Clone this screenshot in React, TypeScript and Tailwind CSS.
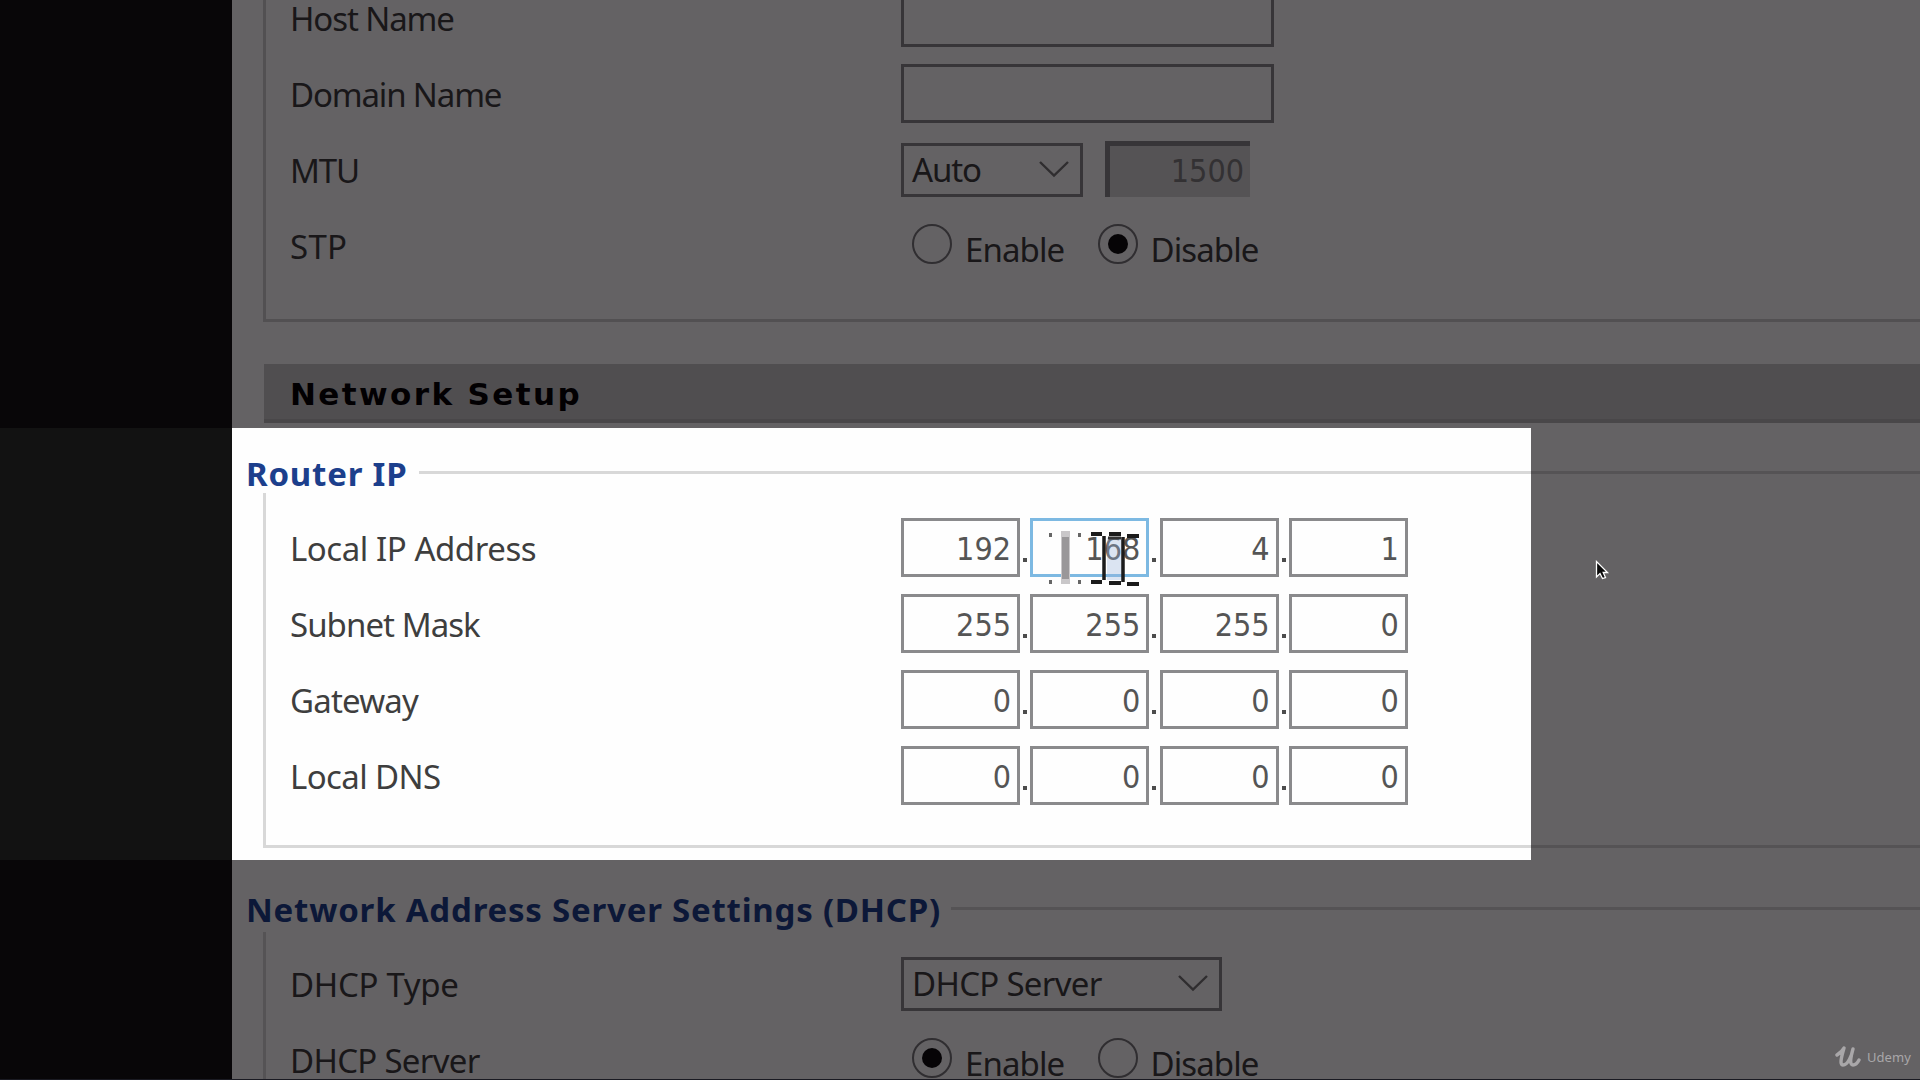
import React from "react";

const label = "font-['Noto_Sans',sans-serif] text-[33px] leading-[44px] whitespace-pre text-[#3e3e3e]";
const digits = "font-['DejaVu_Sans_Condensed','DejaVu_Sans',sans-serif] [font-stretch:condensed] text-[32px] leading-[38px] whitespace-pre";
const heading = "font-['Noto_Sans',sans-serif] font-bold text-[33px] leading-[44px] tracking-[0.78px] whitespace-pre text-[#1c3f8c]";

function Row({ name, tracking, children }: { name: string; tracking: string; children: React.ReactNode }) {
  return (
    <div className="flex h-[76px] items-center">
      <div className={`w-[611px] shrink-0 pt-px ${label} ${tracking}`}>{name}</div>
      {children}
    </div>
  );
}

function Box() {
  return <div className="mb-0.5 h-[59px] w-[373px] border-[3px] border-[#8a8a8c]" />;
}

function Select({ value, size, tracking }: { value: string; size: string; tracking: string }) {
  return (
    <div className={`flex h-[54px] items-center justify-between border-[3px] border-[#8a8a8c] pr-[11px] pl-2 ${size}`}>
      <span className={`${label} ${tracking}`}>{value}</span>
      <svg width="30" height="18" viewBox="0 0 30 18" fill="none" stroke="#757575" strokeWidth="2.4">
        <path d="M1 1 L15 14.5 L29 1" />
      </svg>
    </div>
  );
}

function Radio({ text, on, size }: { text: string; on?: boolean; size: string }) {
  return (
    <div className={`flex items-center ${size}`}>
      <div className="-mt-1 flex size-10 shrink-0 items-center justify-center rounded-full border-[2.5px] border-[#77777a]">
        {on && <div className="size-5 rounded-full bg-[#0c0c0c]" />}
      </div>
      <span className={`ml-[13px] pt-2 tracking-[-0.9px] ${label}`}>{text}</span>
    </div>
  );
}

function Octets({ values, focus }: { values: string[]; focus?: number }) {
  return (
    <div className="mb-px flex">
      {values.map((v, i) => (
        <React.Fragment key={i}>
          <div className={`relative flex h-[59px] w-[119px] items-center justify-end border-[3px] pr-1.5 text-[#555] ${focus === i ? "border-[#7db9e2]" : "border-[#8a8a8c]"}`}>
            <span className={`pt-[3px] ${digits}`}>{v}</span>
            {focus === i && <DragTrail />}
          </div>
          {i < 3 && (
            <div className="flex w-[10.3px] items-end justify-center pb-[15px]">
              <div className="size-1 bg-[#4c4c4c]" />
            </div>
          )}
        </React.Fragment>
      ))}
    </div>
  );
}

function DragTrail() {
  return (
    <svg className="absolute top-[8px] left-[12px]" width="100" height="60" viewBox="0 0 100 60">
      <g fill="#666">
        <rect x="4" y="4" width="3" height="4" />
        <rect x="33" y="4" width="3" height="4" />
        <rect x="4" y="51" width="3" height="4" />
        <rect x="33" y="51" width="3" height="4" />
      </g>
      <rect x="16" y="2" width="9" height="53" fill="#c9c7c9" />
      <rect x="17" y="8" width="7" height="42" fill="#999799" />
      <rect x="62" y="9" width="15" height="42" fill="#9ab5dc" opacity=".35" />
      <g fill="none" stroke="#1b1b1b" strokeWidth="4">
        <path d="M46 5h11M64 5h12M82 7h12M46 53h11M64 54h12M82 55h12" />
        <path d="M59 7v44M78 8v45" strokeWidth="3.5" />
        <path d="M63 9h13" stroke="#333" strokeWidth="3" />
      </g>
    </svg>
  );
}

function Legend({ text, size }: { text: string; size: string }) {
  return (
    <div className="flex h-11 items-center">
      <span className={`ml-3.5 shrink-0 ${heading} ${size}`}>{text}</span>
      <div className="-mt-[3px] h-[3px] grow bg-[#d8d8d8]" />
    </div>
  );
}

export default function App() {
  return (
    <div className="relative flex h-[1080px] w-[1920px] overflow-hidden bg-[#121212]">
      <div className="w-[232px] shrink-0" />
      <main className="flex h-[1080px] grow flex-col overflow-hidden bg-[#fefefe]">
        <section className="ml-[31px] h-[322px] shrink-0 overflow-hidden border-b-[3px] border-l-[3px] border-[#d0d0d0] pl-6">
          <div className="-mt-5">
            <Row name="Host Name" tracking="tracking-[-1.1px]"><Box /></Row>
            <Row name="Domain Name" tracking="tracking-[-1.15px]"><Box /></Row>
            <Row name="MTU" tracking="tracking-[-1.2px]">
              <Select value="Auto" size="w-[182px]" tracking="tracking-[-1.1px]" />
              <div className="mb-0.5 ml-[22px] flex h-14 w-[145px] items-center justify-end border-t-[5px] border-l-[5px] border-t-[#8a8a8c] border-l-[#8a8a8c] bg-[#d8d8d8] pr-1.5 pb-0.5 text-[#808080]">
                <span className={digits}>1500</span>
              </div>
            </Row>
            <Row name="STP" tracking="tracking-[0.3px]">
              <Radio text="Enable" size="ml-[11px] w-[185.5px]" />
              <Radio text="Disable" on size="" />
            </Row>
          </div>
        </section>
        <div className="mt-[42px] ml-8 flex h-[59px] shrink-0 items-center border-b-4 border-[#b8b8b8] bg-[#cbcbcb] pt-[5px] pl-[26px]">
          <h2 className="font-['DejaVu_Sans',sans-serif] text-[31px] leading-[44px] font-bold tracking-[2.4px] text-black">Network Setup</h2>
        </div>
        <section className="mt-[29px] h-[396px] shrink-0">
          <Legend text="Router IP" size="w-[173px]" />
          <div className="mt-[-3px] ml-[31px] h-[355px] border-b-[3px] border-l-[3px] border-[#d8d8d8] pt-[17px] pl-6">
            <Row name="Local IP Address" tracking="tracking-[-0.45px]"><Octets values={["192", "168", "4", "1"]} focus={1} /></Row>
            <Row name="Subnet Mask" tracking="tracking-[-0.95px]"><Octets values={["255", "255", "255", "0"]} /></Row>
            <Row name="Gateway" tracking="tracking-[-0.8px]"><Octets values={["0", "0", "0", "0"]} /></Row>
            <Row name="Local DNS" tracking="tracking-[-0.6px]"><Octets values={["0", "0", "0", "0"]} /></Row>
          </div>
        </section>
        <section className="mt-10 shrink-0">
          <Legend text="Network Address Server Settings (DHCP)" size="w-[705px]" />
          <div className="ml-[31px] h-[160px] border-l-[3px] border-[#d8d8d8] pt-[14px] pl-6">
            <Row name="DHCP Type" tracking="tracking-[-0.3px]"><Select value="DHCP Server" size="w-[321px]" tracking="tracking-[-0.7px]" /></Row>
            <Row name="DHCP Server" tracking="tracking-[-0.7px]">
              <Radio text="Enable" on size="ml-[11px] w-[185.5px]" />
              <Radio text="Disable" size="" />
            </Row>
          </div>
        </section>
      </main>

      <div className="absolute top-[428px] left-0 h-[432px] w-[1531px] shadow-[0_0_0_2000px_rgba(4,0,4,0.615)]" />

      <svg className="absolute top-[560px] left-[1595px]" width="16" height="22" viewBox="0 0 16 22">
        <path d="M1.5 1.5V17L5 13.5L7.5 18.5L10.5 17.5L8.2 12.5H12.5Z" fill="#0a0a0a" stroke="#fff" strokeWidth="1.3" />
      </svg>

      <div className="absolute right-[9px] bottom-[11px] flex items-center gap-1.5 text-[#a9a7a9]">
        <svg width="26" height="24" viewBox="0 0 26 24" fill="none" stroke="currentColor" strokeLinecap="round" strokeLinejoin="round">
          <path d="M2 10C5 8 8 5 9 3C7 10 4 20 8 20C13 20 17 10 18 4C16 11 14 20 18 20C21 20 23 17 24 15" strokeWidth="3.4" />
        </svg>
        <span className="font-['Noto_Sans',sans-serif] text-[13px] leading-6 tracking-[0.1px]">Udemy</span>
      </div>
      <div className="absolute bottom-0 left-0 h-px w-full bg-[#1a1a22]" />
    </div>
  );
}
